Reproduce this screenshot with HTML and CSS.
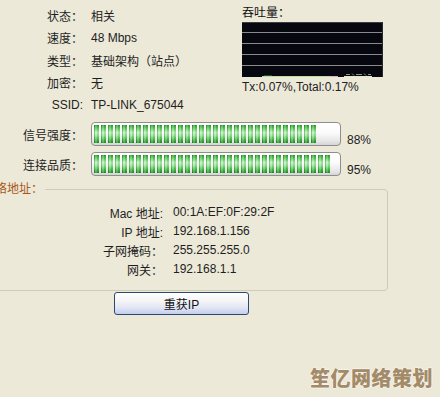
FILE: index.html
```html
<!DOCTYPE html>
<html>
<head>
<meta charset="utf-8">
<link rel="stylesheet" href="styles.css">
</head>
<body>
<div class="page">
  <div class="top">
    <div class="info">
      <span class="lbl">状态：</span><span>相关</span>
      <span class="lbl">速度：</span><span>48 Mbps</span>
      <span class="lbl">类型：</span><span>基础架构（站点）</span>
      <span class="lbl">加密：</span><span>无</span>
      <span class="lbl">SSID:</span><span>TP-LINK_675044</span>
    </div>
    <div class="tp">
      <div class="tp-title">吞吐量：</div>
      <svg class="graph" width="141" height="55" viewBox="0 0 141 55">
        <rect x="0" y="0" width="141" height="55" fill="#07070f"/>
        <line x1="0" y1="0.5" x2="141" y2="0.5" stroke="#3c3c44"/>
        <g stroke="#8a8a8a" stroke-width="1">
          <line x1="0" y1="10.5" x2="141" y2="10.5"/>
          <line x1="0" y1="21.5" x2="141" y2="21.5"/>
          <line x1="0" y1="32.5" x2="141" y2="32.5"/>
          <line x1="0" y1="43.5" x2="141" y2="43.5"/>
        </g>
        <line x1="140.5" y1="0" x2="140.5" y2="55" stroke="#2a2a30"/>
        <line x1="20" y1="54.5" x2="88" y2="54.5" stroke="#b9dca0"/>
        <line x1="88" y1="54.5" x2="96" y2="54.5" stroke="#d7b8b0"/>
        <line x1="22" y1="53.5" x2="30" y2="53.5" stroke="#2c4a2c"/>
        <g stroke="#7fa07a" stroke-width="1">
          <line x1="104" y1="52.5" x2="108" y2="52.5"/>
          <line x1="110" y1="51.5" x2="112" y2="53.5"/>
          <line x1="114" y1="52.5" x2="120" y2="52.5"/>
          <line x1="122" y1="51.5" x2="124" y2="53.5"/>
          <line x1="126" y1="52.5" x2="129" y2="52.5"/>
        </g>
        <line x1="102" y1="54.5" x2="130" y2="54.5" stroke="#dfe6d4"/>
      </svg>
      <div class="tp-text">Tx:0.07%,Total:0.17%</div>
    </div>
  </div>

  <div class="bars">
    <div class="bar-row">
      <span class="bar-lbl">信号强度：</span>
      <div class="track"><div class="fill" style="width:222px"></div></div>
      <span class="pct">88%</span>
    </div>
    <div class="bar-row">
      <span class="bar-lbl">连接品质：</span>
      <div class="track"><div class="fill" style="width:236px"></div></div>
      <span class="pct">95%</span>
    </div>
  </div>

  <fieldset class="group">
    <legend class="group-title">网络地址：</legend>
    <div class="addr">
      <span class="lbl">Mac 地址:</span><span>00:1A:EF:0F:29:2F</span>
      <span class="lbl">IP 地址:</span><span>192.168.1.156</span>
      <span class="lbl">子网掩码：</span><span>255.255.255.0</span>
      <span class="lbl">网关：</span><span>192.168.1.1</span>
    </div>
  </fieldset>

  <button class="btn">重获IP</button>

  <div class="wm">笙亿网络策划</div>
</div>
</body>
</html>
```

FILE: styles.css
```css
* { box-sizing: border-box; }

html, body {
  margin: 0;
  padding: 0;
  background: #ece9d8;
}

body {
  width: 440px;
  height: 397px;
  overflow: hidden;
  font-family: "Liberation Sans", "Noto Sans CJK SC", sans-serif;
  font-size: 12px;
  color: #1e1e1e;
}

.page {
  position: relative;
  width: 440px;
  height: 397px;
  overflow: hidden;
}

.top {
  display: flex;
  padding-top: 4px;
}

.info {
  width: 242px;
  display: grid;
  grid-template-columns: 83px 1fr;
  column-gap: 8px;
  grid-auto-rows: 22.5px;
  align-items: center;
  white-space: nowrap;
}

.lbl {
  text-align: right;
  white-space: nowrap;
}

.tp {
  display: flex;
  flex-direction: column;
}

.tp-title {
  margin-top: 2px;
  line-height: 14px;
  color: #111;
}

.graph {
  display: block;
  margin-top: 2px;
}

.tp-text {
  margin-top: 3px;
  line-height: 14px;
  white-space: nowrap;
  color: #222;
}

.bars {
  margin-top: 5.5px;
  display: flex;
  flex-direction: column;
  gap: 6px;
}

.bar-row {
  display: flex;
  height: 24px;
  align-items: center;
}

.bar-lbl {
  width: 83px;
  margin-right: 8px;
  text-align: right;
  white-space: nowrap;
}

.track {
  width: 250px;
  height: 24px;
  border: 1px solid #8e8e8e;
  border-radius: 4px;
  padding: 2px;
  background: linear-gradient(to bottom, #ffffff 0%, #fbfbfb 45%, #e4e4e4 85%, #d4d4d4 100%);
}

.fill {
  height: 100%;
  background-image:
    repeating-linear-gradient(90deg, rgba(0,90,0,0.28) 0 1px, rgba(255,255,255,0.18) 1px 3px, rgba(0,90,0,0.12) 3px 5px, transparent 5px 7px),
    linear-gradient(to bottom, #2f9d2f 0%, #5fcd5f 18%, #b9f3b9 42%, #9ae79a 58%, #49bb49 82%, #1f8f1f 100%);
  -webkit-mask-image: repeating-linear-gradient(90deg, #000 0 5px, transparent 5px 7px);
  mask-image: repeating-linear-gradient(90deg, #000 0 5px, transparent 5px 7px);
}

.pct {
  align-self: flex-end;
  margin-left: 6px;
  line-height: 14px;
  margin-bottom: -1px;
  color: #222;
}

.group {
  width: 418px;
  margin: 6px 0 0 -30px;
  padding: 6.5px 0 11.5px 10px;
  border: 1px solid #d0cbb8;
  border-radius: 4px;
  min-width: 0;
}

.group-title {
  padding: 0 2px;
  line-height: 14px;
  color: #a8581a;
}

.addr {
  display: grid;
  grid-template-columns: 182px auto;
  column-gap: 10px;
  grid-auto-rows: 19px;
  align-items: center;
}

.btn {
  display: block;
  margin: 1px 0 0 114px;
  width: 135px;
  height: 23px;
  padding: 0;
  border: 1px solid #2b4a72;
  border-radius: 3px;
  background: linear-gradient(to bottom, #ffffff 0%, #f6f6f8 35%, #e2e6f4 70%, #c3cfee 100%);
  font-family: "Liberation Sans", "Noto Sans CJK SC", sans-serif;
  font-size: 12px;
  color: #111;
}

.wm {
  position: absolute;
  right: 7px;
  bottom: 8px;
  font-family: "Noto Sans CJK SC", sans-serif;
  font-size: 20px;
  font-weight: 900;
  line-height: 22px;
  letter-spacing: 0.5px;
  color: #a38a68;
  text-shadow: 1px 0 0 #f6f2e8, -1px 0 0 #f6f2e8, 0 1px 0 #f6f2e8, 0 -1px 0 #f6f2e8;
}
```
